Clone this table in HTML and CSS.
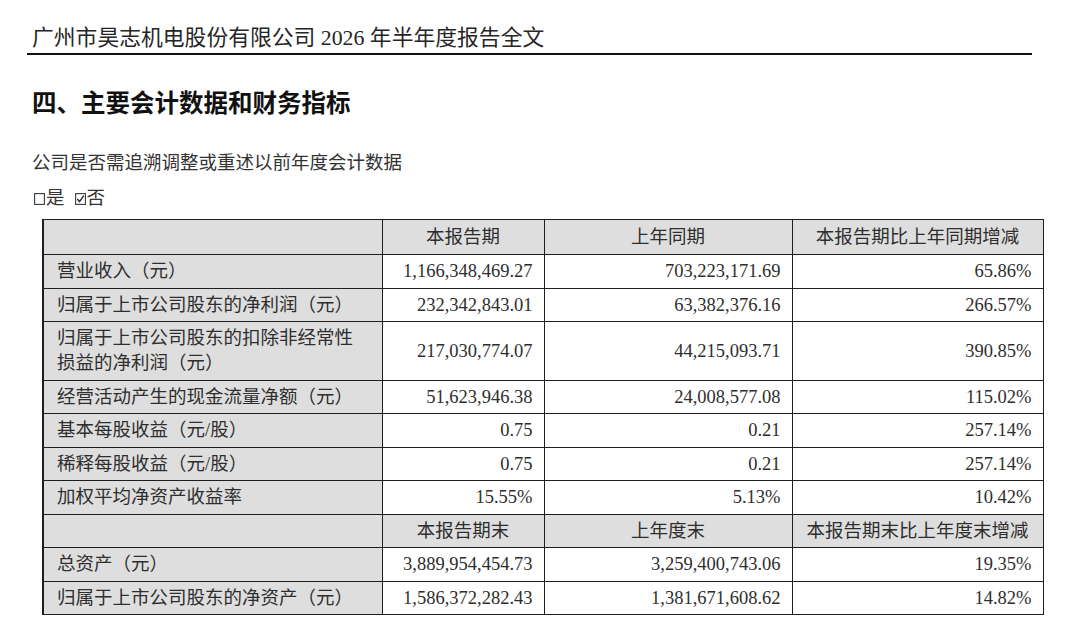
FILE: index.html
```html
<!DOCTYPE html>
<html lang="zh-CN">
<head>
<meta charset="utf-8">
<title>主要会计数据和财务指标</title>
<link rel="stylesheet" href="styles.css">
</head>
<body>
<div class="page">
  <div class="doc-header">广州市昊志机电股份有限公司 2026 年半年度报告全文</div>
  <h2 class="section-title">四、主要会计数据和财务指标</h2>
  <p class="question">公司是否需追溯调整或重述以前年度会计数据</p>
  <p class="choices">
    <span class="choice"><svg class="box" viewBox="0 0 11 12"><rect x="0.6" y="0.6" width="9.8" height="10.8" fill="none" stroke="#3a3a3a" stroke-width="1.1"/></svg>是</span>
    <span class="choice"><svg class="box" viewBox="0 0 11 12"><rect x="0.6" y="0.6" width="9.8" height="10.8" fill="none" stroke="#3a3a3a" stroke-width="1.1"/><path d="M2.3 6 L4.5 8.6 L8.8 2.6" fill="none" stroke="#222" stroke-width="1.4"/></svg>否</span>
  </p>
  <table class="fin">
    <colgroup>
      <col class="c-label"><col class="c-cur"><col class="c-prev"><col class="c-chg">
    </colgroup>
    <tbody>
      <tr class="hd first">
        <td class="lbl"></td><td>本报告期</td><td>上年同期</td><td>本报告期比上年同期增减</td>
      </tr>
      <tr><td class="lbl">营业收入（元）</td><td class="num">1,166,348,469.27</td><td class="num">703,223,171.69</td><td class="num">65.86%</td></tr>
      <tr><td class="lbl">归属于上市公司股东的净利润（元）</td><td class="num">232,342,843.01</td><td class="num">63,382,376.16</td><td class="num">266.57%</td></tr>
      <tr class="tall"><td class="lbl two">归属于上市公司股东的扣除非经常性<br>损益的净利润（元）</td><td class="num">217,030,774.07</td><td class="num">44,215,093.71</td><td class="num">390.85%</td></tr>
      <tr><td class="lbl">经营活动产生的现金流量净额（元）</td><td class="num">51,623,946.38</td><td class="num">24,008,577.08</td><td class="num">115.02%</td></tr>
      <tr><td class="lbl">基本每股收益（元/股）</td><td class="num">0.75</td><td class="num">0.21</td><td class="num">257.14%</td></tr>
      <tr><td class="lbl">稀释每股收益（元/股）</td><td class="num">0.75</td><td class="num">0.21</td><td class="num">257.14%</td></tr>
      <tr><td class="lbl">加权平均净资产收益率</td><td class="num">15.55%</td><td class="num">5.13%</td><td class="num">10.42%</td></tr>
      <tr class="hd">
        <td class="lbl"></td><td>本报告期末</td><td>上年度末</td><td>本报告期末比上年度末增减</td>
      </tr>
      <tr><td class="lbl">总资产（元）</td><td class="num">3,889,954,454.73</td><td class="num">3,259,400,743.06</td><td class="num">19.35%</td></tr>
      <tr><td class="lbl">归属于上市公司股东的净资产（元）</td><td class="num">1,586,372,282.43</td><td class="num">1,381,671,608.62</td><td class="num">14.82%</td></tr>
    </tbody>
  </table>
</div>
</body>
</html>
```
FILE: styles.css
```css
html, body {
  margin: 0;
  padding: 0;
  background: #ffffff;
}

body {
  font-family: "Liberation Serif", "Noto Sans CJK SC", serif;
  color: #2e2e2e;
}

.page {
  width: 1071px;
  height: 629px;
  overflow: hidden;
}

.doc-header {
  margin-left: 27px;
  width: 1005px;
  box-sizing: border-box;
  height: 55px;
  padding-left: 5px;
  padding-top: 27px;
  font-size: 21.8px;
  line-height: 22px;
  border-bottom: 2px solid #111;
  white-space: nowrap;
  color: #262626;
}

.section-title {
  margin: 32px 0 0 32px;
  font-size: 24.5px;
  line-height: 30px;
  font-weight: 700;
  color: #111;
  font-family: "Noto Sans CJK SC", sans-serif;
}

.question {
  margin: 34px 0 0 32px;
  font-size: 18.5px;
  line-height: 24px;
  color: #333;
}

.choices {
  margin: 11px 0 0 34px;
  font-size: 18.5px;
  line-height: 24px;
  display: flex;
  gap: 10px;
  color: #333;
}

.choice {
  display: inline-flex;
  align-items: center;
  gap: 1px;
}

.box {
  width: 11px;
  height: 12px;
  margin-top: 1px;
}

.fin {
  margin: 9px 0 0 42px;
  border-collapse: collapse;
  table-layout: fixed;
  width: 1000px;
  font-size: 18.5px;
  color: #2e2e2e;
}

.c-label { width: 339px; }
.c-cur { width: 162px; }
.c-prev { width: 248px; }
.c-chg { width: 251px; }

.fin td {
  border: 1px solid #1e1e1e;
  height: 32.5px;
  padding: 0 11px 0 13px;
  line-height: 24px;
  white-space: nowrap;
  vertical-align: middle;
  background: #ffffff;
}

.fin tr:first-child td {
  height: 34px;
}

.fin tr.tall td {
  height: 57.5px;
}

.fin td:first-child {
  border-left: 2px solid #1e1e1e;
}

.fin td.lbl {
  background: #dedede;
  text-align: left;
}

.fin td.two {
  line-height: 25px;
  white-space: normal;
}

.fin td.num {
  text-align: right;
}

.fin tr.hd td {
  background: #dedede;
  text-align: center;
  padding: 0;
}
```
